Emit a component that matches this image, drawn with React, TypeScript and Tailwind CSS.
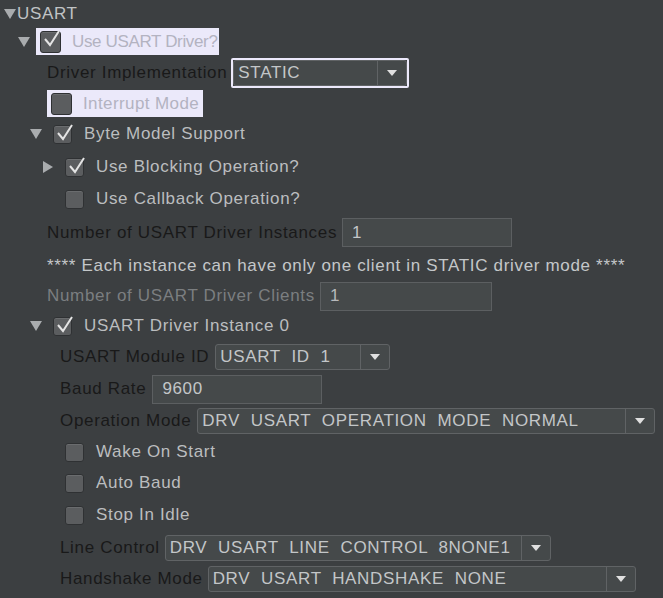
import { ReactNode } from "react";

const font = { fontFamily: '"Liberation Sans", Arial, sans-serif' };

function Caret({ open }: { open: boolean }) {
    return open ? (
        <svg width="12" height="10" viewBox="0 0 12 10" className="shrink-0">
            <path d="M0 0 L12 0 L6 10 Z" fill="#a9acae" />
        </svg>
    ) : (
        <svg width="10" height="12" viewBox="0 0 10 12" className="shrink-0">
            <path d="M0 0 L10 6 L0 12 Z" fill="#a9acae" />
        </svg>
    );
}

function Check({ checked, big }: { checked?: boolean; big?: boolean }) {
    return (
        <div
            className={`relative shrink-0 rounded-[3px] border border-[#2f3133] bg-[#5b5d5f] shadow-[inset_0_1px_0_#6a6c6e] ${big ? "w-[21px] h-[22px]" : "w-[19px] h-[19px]"}`}
        >
            {checked && (
                <svg width="20" height="20" viewBox="0 0 20 20" className="absolute left-[1px] top-[-3px]">
                    <path d="M3 10 L8 16 L17 2" fill="none" stroke="#e4e4e4" strokeWidth="2" />
                </svg>
            )}
        </div>
    );
}

function Select({ value, w, focus }: { value: string; w: number; focus?: boolean }) {
    return (
        <div
            className={`flex items-stretch ${focus ? "border-2 border-[#ece9fb] rounded-[2px] h-[30px]" : "h-[26px]"}`}
            style={{ width: w }}
        >
            <div className="flex flex-1 items-stretch rounded-[3px] border border-[#606365] bg-[#45494a]">
                <div className="flex-1 flex items-center pl-[4px] text-[#c3c6c8] whitespace-pre overflow-hidden">{value}</div>
                <div className="w-[29px] shrink-0 border-l border-[#606365] flex items-center justify-center">
                    <svg width="10" height="6" viewBox="0 0 10 6">
                        <path d="M0 0 L10 0 L5 6 Z" fill="#e0e0e0" />
                    </svg>
                </div>
            </div>
        </div>
    );
}

function Input({ value, w, dim }: { value: string; w: number; dim?: boolean }) {
    return (
        <div
            className={`h-[29px] border border-[#5c5f61] bg-[#45494a] flex items-center pl-[9px] ${dim ? "text-[#b7babc]" : "text-[#c3c6c8]"}`}
            style={{ width: w }}
        >
            {value}
        </div>
    );
}

function Row({ h, pl, children }: { h: number; pl: number; children: ReactNode }) {
    return (
        <div className="flex items-center" style={{ height: h, paddingLeft: pl }}>
            {children}
        </div>
    );
}

export default function App() {
    return (
        <div className="w-[663px] h-[598px] bg-[#3c3f41] text-[17px] text-[#bbbdbf] overflow-hidden tracking-[0.67px] whitespace-nowrap" style={font}>
            <Row h={27} pl={4}>
                <Caret open />
                <span className="ml-[1px] text-[#c0c3c5]">USART</span>
            </Row>
            <Row h={29} pl={18}>
                <Caret open />
                <div className="ml-[6px] flex items-center h-[27px] w-[183px] bg-[#ebe9fa] pl-[4px]">
                    <Check checked big />
                    <span className="ml-[11px] text-[#b3b3c1] tracking-[-0.35px]">Use USART Driver?</span>
                </div>
            </Row>
            <Row h={34} pl={47}>
                <span className="text-[#191919]">Driver Implementation</span>
                <div className="ml-[4px]">
                    <Select value="STATIC" w={178} focus />
                </div>
            </Row>
            <Row h={27} pl={47}>
                <div className="flex items-center h-[27px] w-[156px] bg-[#ebe9fa] pl-[4px]">
                    <Check big />
                    <span className="ml-[11px] text-[#b3b3c1] tracking-[0.4px]">Interrupt Mode</span>
                </div>
            </Row>
            <Row h={34} pl={30}>
                <Caret open />
                <div className="ml-[11px]"><Check checked /></div>
                <span className="ml-[12px]">Byte Model Support</span>
            </Row>
            <Row h={32} pl={43}>
                <Caret open={false} />
                <div className="ml-[12px]"><Check checked /></div>
                <span className="ml-[12px]">Use Blocking Operation?</span>
            </Row>
            <Row h={32} pl={65}>
                <Check />
                <span className="ml-[12px]">Use Callback Operation?</span>
            </Row>
            <Row h={35} pl={47}>
                <span className="text-[#191919]">Number of USART Driver Instances</span>
                <div className="ml-[5px]"><Input value="1" w={170} /></div>
            </Row>
            <Row h={31} pl={47}>
                <span className="text-[#c4c7c9]">**** Each instance can have only one client in STATIC driver mode ****</span>
            </Row>
            <Row h={30} pl={47}>
                <span className="text-[#7b7e80]">Number of USART Driver Clients</span>
                <div className="ml-[5px]"><Input value="1" w={172} dim /></div>
            </Row>
            <Row h={30} pl={30}>
                <Caret open />
                <div className="ml-[11px]"><Check checked /></div>
                <span className="ml-[12px]">USART Driver Instance 0</span>
            </Row>
            <Row h={32} pl={60}>
                <span className="text-[#191919]">USART Module ID</span>
                <div className="ml-[6px]"><Select value="USART  ID  1" w={175} /></div>
            </Row>
            <Row h={32} pl={60}>
                <span className="text-[#191919]">Baud Rate</span>
                <div className="ml-[6px]"><Input value="9600" w={170} /></div>
            </Row>
            <Row h={32} pl={60}>
                <span className="text-[#191919]">Operation Mode</span>
                <div className="ml-[6px]"><Select value="DRV  USART  OPERATION  MODE  NORMAL" w={458} /></div>
            </Row>
            <Row h={30} pl={65}>
                <Check />
                <span className="ml-[12px]">Wake On Start</span>
            </Row>
            <Row h={32} pl={65}>
                <Check />
                <span className="ml-[12px]">Auto Baud</span>
            </Row>
            <Row h={32} pl={65}>
                <Check />
                <span className="ml-[12px]">Stop In Idle</span>
            </Row>
            <Row h={33} pl={60}>
                <span className="text-[#191919]">Line Control</span>
                <div className="ml-[5px]"><Select value="DRV  USART  LINE  CONTROL  8NONE1" w={386} /></div>
            </Row>
            <Row h={29} pl={60}>
                <span className="text-[#191919]">Handshake Mode</span>
                <div className="ml-[5px]"><Select value="DRV  USART  HANDSHAKE  NONE" w={428} /></div>
            </Row>
        </div>
    );
}
